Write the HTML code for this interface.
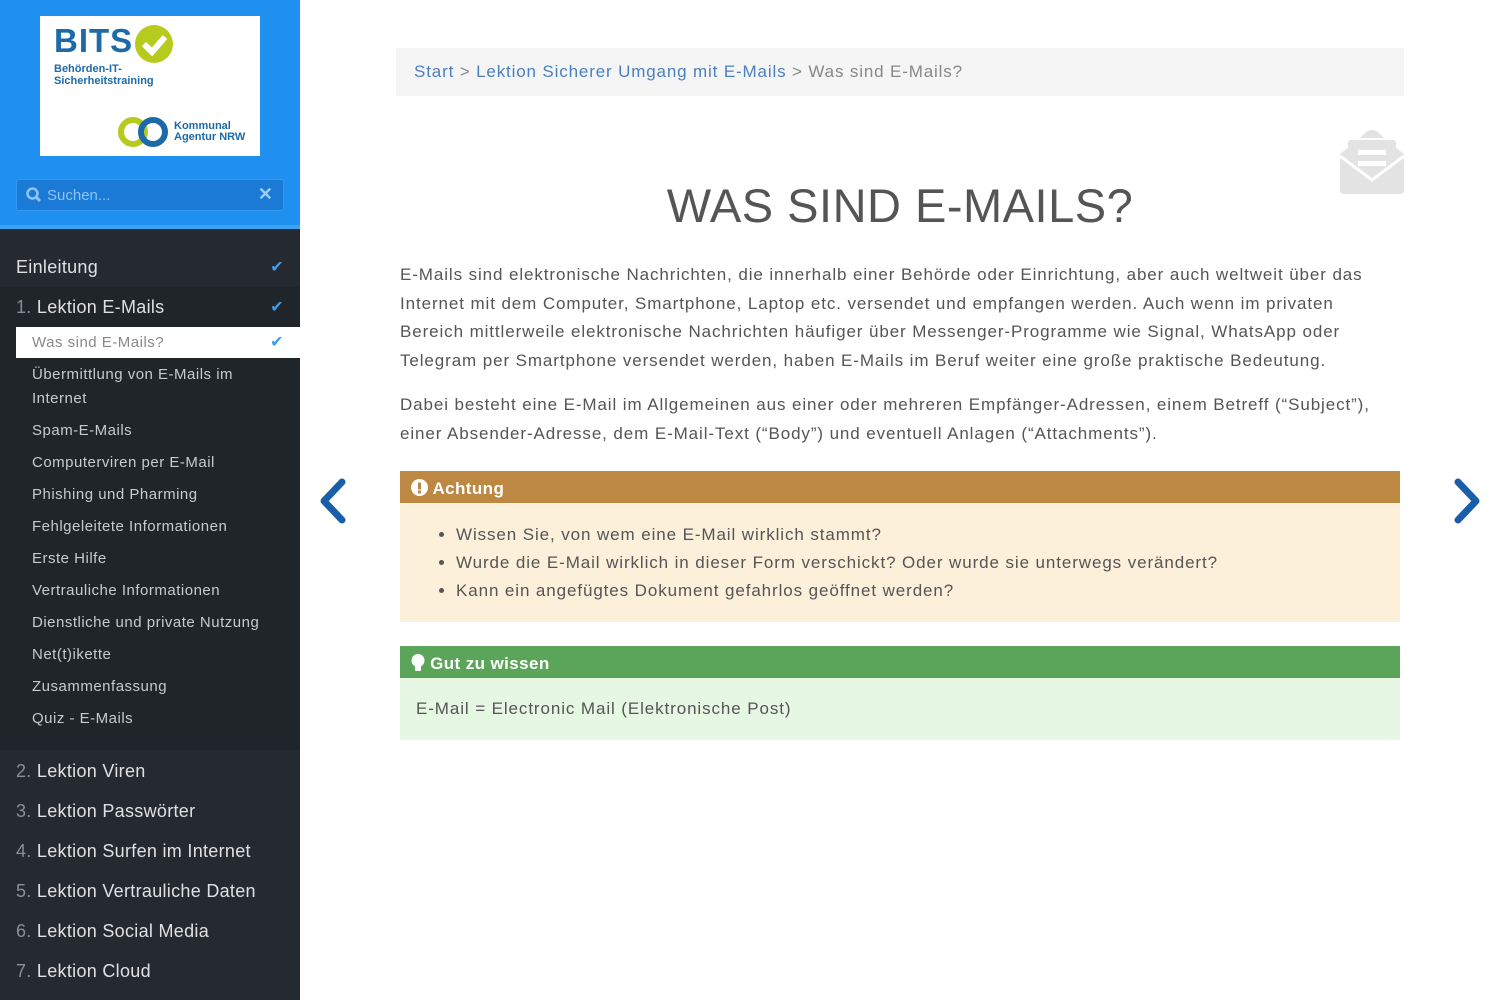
<!DOCTYPE html>
<html><head><meta charset="utf-8"><style>
*{margin:0;padding:0;box-sizing:border-box}
body{width:1500px;height:1000px;overflow:hidden;font-family:"Liberation Sans",sans-serif;background:#fff;position:relative}
#side{position:absolute;left:0;top:0;width:300px;height:1000px;background:#252a31}
#head{position:absolute;left:0;top:0;width:300px;height:229px;background:#1f8ff0;border-bottom:4px solid #3da2f5}
#logo{position:absolute;left:40px;top:16px;width:220px;height:140px;background:#fff}
#search{position:absolute;left:16px;top:179px;width:268px;height:32px;background:#1a7ad6;border:1px solid #3498ee;border-radius:3px;color:#8fc4f4;font-size:15px;padding:7px 0 0 30px}
.row{position:absolute;left:0;width:300px;color:#e0e0e0;font-size:18px;padding-left:16px;letter-spacing:0.3px}
.row .n{color:#8a8f95}
.chk{position:absolute;right:16px;color:#3d9cf0;font-size:16px}
.sub{position:absolute;left:32px;color:#c8cacc;font-size:15px;line-height:24px;letter-spacing:0.5px}
#bc{position:absolute;left:396px;top:48px;width:1008px;height:48px;background:#f5f5f5;color:#888;font-size:17px;padding:14px 0 0 18px;letter-spacing:0.85px}
#bc a{color:#4a7fc1;text-decoration:none}
h1{position:absolute;left:400px;width:1000px;top:178px;text-align:center;font-weight:normal;font-size:47px;color:#555;letter-spacing:0.5px}
.p{position:absolute;left:400px;width:990px;color:#555;font-size:17px;line-height:28.5px;letter-spacing:0.9px}
.box{position:absolute;left:400px;width:1000px}
.bh{color:#fff;font-weight:bold;font-size:17px;padding:8px 0 0 11px;letter-spacing:0.4px}
</style></head><body>
<div id="side">
<div id="head">
 <div id="logo">
  <div style="position:absolute;left:14px;top:6px;font-size:33px;font-weight:bold;color:#1d6aa8;letter-spacing:1px">BITS</div>
  <svg style="position:absolute;left:94px;top:8px" width="40" height="40"><circle cx="20" cy="20" r="19" fill="#b7ca1e"/><path d="M10 20 L18 28 L31 13" stroke="#fff" stroke-width="6" fill="none"/></svg>
  <div style="position:absolute;left:14px;top:47px;font-size:11px;font-weight:bold;color:#1d6aa8;line-height:12px">Behörden-IT-<br>Sicherheitstraining</div>
  <svg style="position:absolute;left:77px;top:100px" width="54" height="32"><circle cx="16" cy="16" r="12" fill="none" stroke="#b7ca1e" stroke-width="6"/><circle cx="36" cy="16" r="12" fill="none" stroke="#1d6aa8" stroke-width="6"/></svg>
  <div style="position:absolute;left:134px;top:105px;font-size:11px;font-weight:bold;color:#1d6aa8;line-height:11px">Kommunal<br>Agentur NRW</div>
 </div>
 <div id="search"><svg style="position:absolute;left:9px;top:7px" width="16" height="16"><circle cx="6.5" cy="6.5" r="5" stroke="#8fc4f4" stroke-width="2.5" fill="none"/><path d="M10 10 L14 14" stroke="#8fc4f4" stroke-width="3"/></svg>Suchen...<span style="position:absolute;right:10px;top:4px;font-weight:bold;font-size:18px;color:#9fcdf5">✕</span></div>
</div>
<div class="row" style="top:247px;height:40px;padding-top:10px">Einleitung<span class="chk" style="top:10px">✔</span></div>
<div style="position:absolute;top:287px;left:0;width:300px;height:463px;background:#202529"></div>
<div class="row" style="top:287px;height:40px;padding-top:10px"><span class="n">1.</span> Lektion E-Mails<span class="chk" style="top:10px">✔</span></div>
<div style="position:absolute;left:16px;top:327px;width:284px;height:31px;background:#fff;color:#888;font-size:15px;padding:7px 0 0 16px;letter-spacing:0.5px">Was sind E-Mails?<span class="chk" style="top:5px">✔</span></div>
<div class="sub" style="top:363px">Übermittlung von E-Mails im<br>Internet</div>
<div class="sub" style="top:419px">Spam-E-Mails</div>
<div class="sub" style="top:451px">Computerviren per E-Mail</div>
<div class="sub" style="top:483px">Phishing und Pharming</div>
<div class="sub" style="top:515px">Fehlgeleitete Informationen</div>
<div class="sub" style="top:547px">Erste Hilfe</div>
<div class="sub" style="top:579px">Vertrauliche Informationen</div>
<div class="sub" style="top:611px">Dienstliche und private Nutzung</div>
<div class="sub" style="top:643px">Net(t)ikette</div>
<div class="sub" style="top:675px">Zusammenfassung</div>
<div class="sub" style="top:707px">Quiz - E-Mails</div>
<div class="row" style="top:761px"><span class="n">2.</span> Lektion Viren</div>
<div class="row" style="top:801px"><span class="n">3.</span> Lektion Passwörter</div>
<div class="row" style="top:841px"><span class="n">4.</span> Lektion Surfen im Internet</div>
<div class="row" style="top:881px"><span class="n">5.</span> Lektion Vertrauliche Daten</div>
<div class="row" style="top:921px"><span class="n">6.</span> Lektion Social Media</div>
<div class="row" style="top:961px"><span class="n">7.</span> Lektion Cloud</div>
</div>
<div id="bc"><a>Start</a> &gt; <a>Lektion Sicherer Umgang mit E-Mails</a> &gt; Was sind E-Mails?</div>
<svg style="position:absolute;left:1340px;top:130px" width="64" height="64"><path d="M0 24 L20 8 L26 2 Q32 -2 38 2 L44 8 L64 24 L64 60 Q64 64 60 64 L4 64 Q0 64 0 60Z" fill="#e3e3e3"/><rect x="10" y="8" width="44" height="40" fill="#fff"/><rect x="8" y="10" width="48" height="38" rx="3" fill="#e3e3e3"/><rect x="18" y="20" width="28" height="5" fill="#fff"/><rect x="18" y="31" width="28" height="5" fill="#fff"/><path d="M0 26 L32 50 L64 26" stroke="#fff" stroke-width="3" fill="none"/></svg>
<h1>WAS SIND E-MAILS?</h1>
<div class="p" style="top:261px">E-Mails sind elektronische Nachrichten, die innerhalb einer Behörde oder Einrichtung, aber auch weltweit über das Internet mit dem Computer, Smartphone, Laptop etc. versendet und empfangen werden. Auch wenn im privaten Bereich mittlerweile elektronische Nachrichten häufiger über Messenger-Programme wie Signal, WhatsApp oder Telegram per Smartphone versendet werden, haben E-Mails im Beruf weiter eine große praktische Bedeutung.</div>
<div class="p" style="top:391px">Dabei besteht eine E-Mail im Allgemeinen aus einer oder mehreren Empfänger-Adressen, einem Betreff (“Subject”), einer Absender-Adresse, dem E-Mail-Text (“Body”) und eventuell Anlagen (“Attachments”).</div>
<svg style="position:absolute;left:318px;top:478px" width="30" height="46"><path d="M24 4 L6 23 L24 42" stroke="#1a5ea8" stroke-width="7" fill="none" stroke-linecap="round" stroke-linejoin="round"/></svg>
<svg style="position:absolute;left:1452px;top:478px" width="30" height="46"><path d="M6 4 L24 23 L6 42" stroke="#1a5ea8" stroke-width="7" fill="none" stroke-linecap="round" stroke-linejoin="round"/></svg>
<div class="box" style="top:471px;height:151px;background:#fdf0db">
 <div class="bh" style="background:#bd8842;height:32px"><svg width="17" height="17" style="vertical-align:-2px"><circle cx="8.5" cy="8.5" r="8.5" fill="#fff"/><rect x="7" y="3.5" width="3" height="7" fill="#bd8842"/><rect x="7" y="11.5" width="3" height="3" fill="#bd8842"/></svg> Achtung</div>
 <ul style="margin:18px 0 0 56px;color:#555;font-size:17px;line-height:28px;letter-spacing:0.9px">
  <li>Wissen Sie, von wem eine E-Mail wirklich stammt?</li>
  <li>Wurde die E-Mail wirklich in dieser Form verschickt? Oder wurde sie unterwegs verändert?</li>
  <li>Kann ein angefügtes Dokument gefahrlos geöffnet werden?</li>
 </ul>
</div>
<div class="box" style="top:646px;height:94px;background:#e6f7e3">
 <div class="bh" style="background:#5ba55a;height:32px"><svg width="14" height="18" style="vertical-align:-3px"><circle cx="7" cy="6.5" r="6.5" fill="#fff"/><rect x="4" y="11" width="6" height="6" rx="1" fill="#fff"/></svg> Gut zu wissen</div>
 <div style="padding:21px 0 0 16px;color:#555;font-size:17px;letter-spacing:0.9px">E-Mail = Electronic Mail (Elektronische Post)</div>
</div>
</body></html>
